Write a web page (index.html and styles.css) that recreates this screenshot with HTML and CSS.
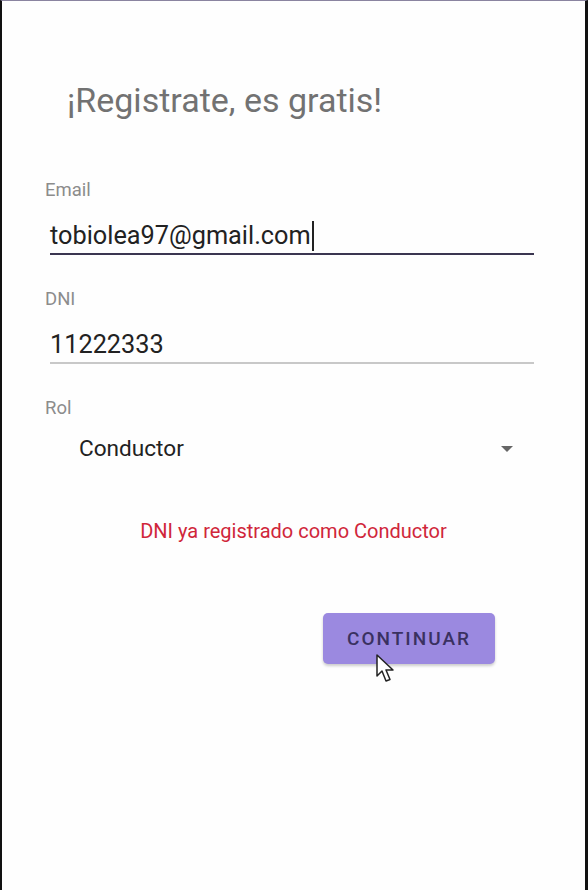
FILE: index.html
```html
<!DOCTYPE html>
<html lang="es">
<head>
<meta charset="utf-8">
<link rel="stylesheet" href="styles.css">
</head>
<body>
<div class="frame">
  <h1 class="title">¡Registrate, es gratis!</h1>
  <div class="form">
    <div class="field">
      <label class="label">Email</label>
      <div class="value focused"><span>tobiolea97@gmail.com</span><span class="caret"></span></div>
    </div>
    <div class="field">
      <label class="label">DNI</label>
      <div class="value">11222333</div>
    </div>
    <div class="field">
      <label class="label">Rol</label>
      <div class="select"><span>Conductor</span><span class="arrow"></span></div>
    </div>
  </div>
  <p class="error">DNI ya registrado como Conductor</p>
  <div class="actions">
    <button class="btn">CONTINUAR
      <svg class="cursor" width="20" height="30" viewBox="0 0 20 30"><path d="M1 1 L1 22 L6 17 L10 27 L14 25.5 L10 16 L17 16 Z" fill="#fff" stroke="#222" stroke-width="1.5" stroke-linejoin="round"/></svg>
    </button>
  </div>
</div>
</body>
</html>
```
FILE: styles.css
```css
html, body { margin: 0; padding: 0; background: #fff; }
body { width: 588px; height: 890px; overflow: hidden; font-family: Roboto, "Liberation Sans", sans-serif; }
.frame {
  box-sizing: border-box;
  width: 588px; height: 890px;
  border-top: 1px solid #8a84a0;
  border-left: 2px solid #111;
  border-right: 3px solid #111;
  background: #fefefe;
}
.title {
  margin: 79px 0 0 65px;
  font-weight: 400;
  font-size: 34px;
  line-height: 40px;
  color: #727272;
}
.form { margin: 59px 51px 0 43px; display: flex; flex-direction: column; }
.field { display: flex; flex-direction: column; margin-bottom: 33px; }
.field:last-child { margin-bottom: 0; }
.label { font-size: 18.5px; line-height: 22px; color: #8c8c8c; }
.value {
  margin: 20px 0 0 5px;
  font-size: 25.3px; line-height: 30px; color: #222;
  padding-bottom: 2px;
  border-bottom: 2px solid #c8c8c8;
  display: flex; align-items: center;
}
.value.focused { border-bottom-color: #3a3550; }
.caret { display: inline-block; width: 2px; height: 30px; background: #222; margin-left: 1px; }
.select {
  margin: 16px 0 0 34px;
  display: flex; justify-content: space-between; align-items: center;
  font-size: 22.6px; line-height: 28px; color: #222;
}
.arrow {
  width: 0; height: 0; margin-right: 21px;
  border-left: 6px solid transparent; border-right: 6px solid transparent;
  border-top: 6px solid #666;
}
.error {
  margin: 56px 0 0 0; text-align: center;
  font-size: 20px; line-height: 24px; color: #d0263a;
}
.actions { display: flex; justify-content: flex-end; margin: 70px 90px 0 0; }
.btn {
  position: relative;
  width: 172px; height: 51px;
  border: none; border-radius: 5px;
  background: #9b89e0;
  box-shadow: 0 2px 3px rgba(0,0,0,0.2);
  font-family: Roboto, "Liberation Sans", sans-serif;
  font-weight: 500; font-size: 19px; letter-spacing: 2px;
  color: #3a3160;
}
.cursor { position: absolute; left: 53px; top: 41px; }
```
